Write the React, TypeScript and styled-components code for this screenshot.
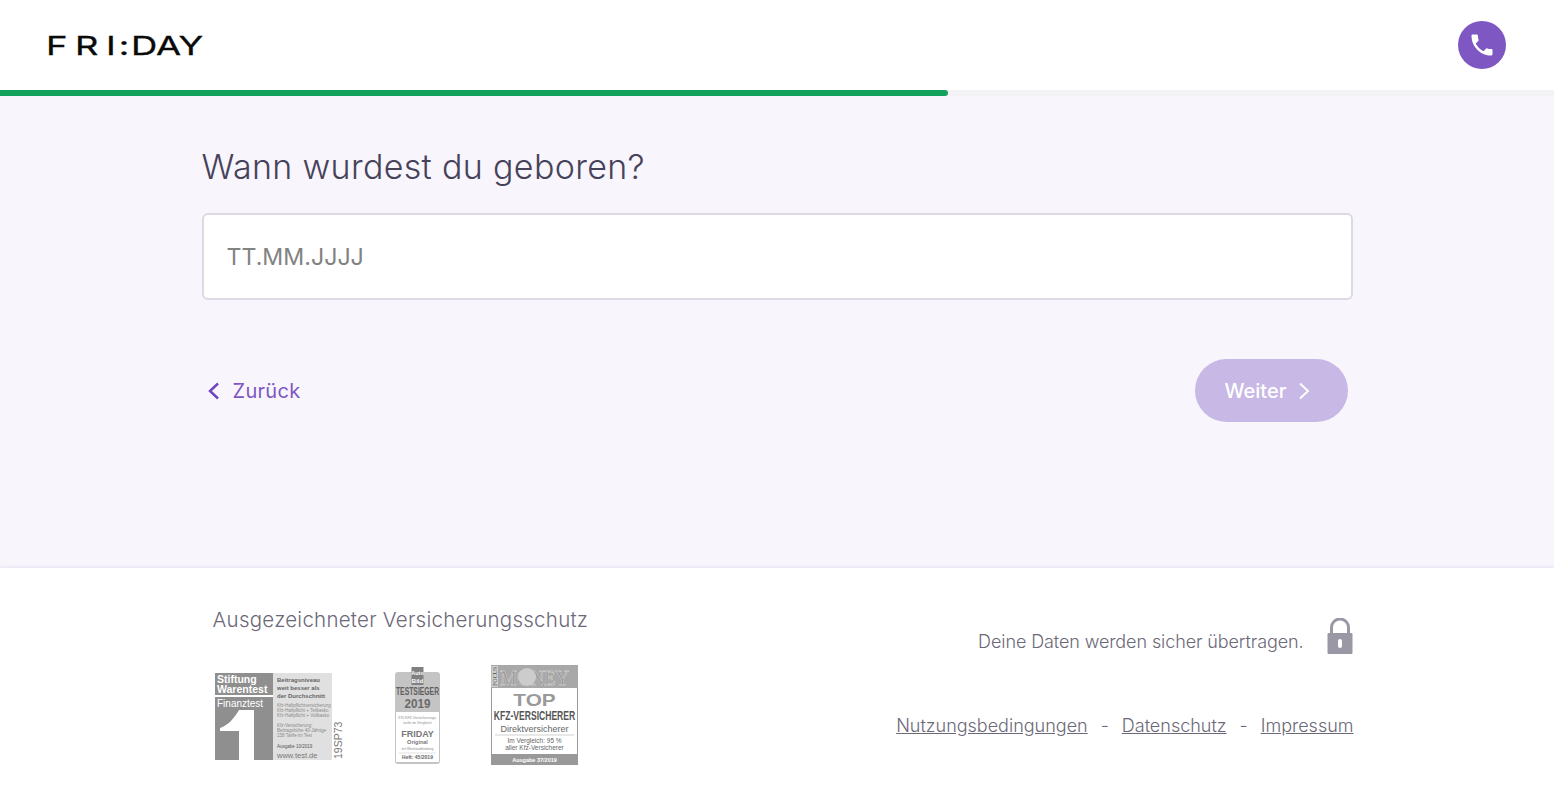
import React, { FC } from "react";
import styled, { createGlobalStyle } from "styled-components";

const GlobalStyle = createGlobalStyle`
  html, body {
    margin: 0;
    padding: 0;
    background: #ffffff;
    font-family: "Inter", "Open Sans", sans-serif;
  }
  * {
    box-sizing: border-box;
  }
`;

const Page = styled.div`
  display: flex;
  flex-direction: column;
  height: 794px;
  overflow: hidden;
`;
const Header = styled.header`
  display: flex;
  align-items: center;
  justify-content: space-between;
  height: 90px;
  padding: 0 48px;
  background: #ffffff;
`;
const Logo = styled.div`
  display: flex;
  align-items: baseline;
  width: 156px;
  margin: 1px 0 0 -2px;
  color: #0a0a0a;
  font-size: 26px;
  line-height: 28px;
  font-weight: 400;
  white-space: nowrap;
  transform: scaleX(1.4);
  transform-origin: left center;
  -webkit-text-stroke: 0.3px #0a0a0a;
`;
const LogoPart = styled.span<{ $spacing: number }>`
  letter-spacing: ${(p) => p.$spacing}px;
`;
const PhoneButton = styled.a`
  display: flex;
  align-items: center;
  justify-content: center;
  width: 48px;
  height: 48px;
  border-radius: 50%;
  background: #7e57c2;
`;
const ProgressTrack = styled.div`
  height: 6px;
  background: #f3f3f5;
`;
const ProgressFill = styled.div<{ $percent: number }>`
  width: ${(p) => p.$percent}%;
  height: 100%;
  background: #13a15c;
  border-radius: 0 3px 3px 0;
`;
const Main = styled.main`
  flex: 1;
  background: #f8f5fd;
`;
const Form = styled.div`
  width: 1151px;
  margin: 0 auto;
  padding-top: 50px;
`;
const Question = styled.h1`
  margin: 0 0 26px;
  color: #46425a;
  font-size: 34px;
  line-height: 41px;
  font-weight: 300;
  letter-spacing: 0.33px;
`;
const DateField = styled.div`
  display: flex;
  align-items: center;
  height: 87px;
  padding: 0 23px;
  background: #ffffff;
  border: 2px solid #dcdae3;
  border-radius: 6px;
  color: #828282;
  font-size: 23.2px;
  font-weight: 400;
`;
const Actions = styled.div`
  display: flex;
  align-items: center;
  justify-content: space-between;
  margin-top: 59px;
  padding: 0 5px;
`;
const BackLink = styled.a`
  display: flex;
  align-items: center;
  gap: 13px;
  color: #7e57c2;
  font-size: 20px;
  font-weight: 400;
  letter-spacing: 0.3px;
`;
const NextButton = styled.button`
  display: flex;
  align-items: center;
  justify-content: center;
  gap: 12px;
  width: 153px;
  height: 63px;
  padding: 0 6px 0 0;
  border: 0;
  border-radius: 32px;
  background: #c7b8e5;
  color: #ffffff;
  font-family: inherit;
  font-size: 20px;
  font-weight: 500;
`;
const Footer = styled.footer`
  display: flex;
  height: 226px;
  background: #ffffff;
  box-shadow: 0 0 4px rgba(70, 60, 110, 0.16);
`;
const FooterInner = styled.div`
  display: flex;
  justify-content: space-between;
  width: 1151px;
  margin: 0 auto;
  padding: 39px 0 0 11px;
`;
const Awards = styled.div`
  display: flex;
  flex-direction: column;
`;
const AwardsTitle = styled.div`
  color: #6b6878;
  font-size: 20.5px;
  line-height: 26px;
  font-weight: 300;
  letter-spacing: 0.25px;
`;
const BadgeRow = styled.div`
  display: flex;
  align-items: flex-start;
  margin-top: 40px;
  padding-left: 2px;
`;
const Badge = styled.svg<{ $gap?: number; $top?: number }>`
  display: block;
  flex: none;
  margin-left: ${(p) => p.$gap ?? 0}px;
  margin-top: ${(p) => p.$top ?? 0}px;
`;
const FooterRight = styled.div`
  display: flex;
  flex-direction: column;
  align-items: flex-end;
`;
const SecureRow = styled.div`
  display: flex;
  align-items: flex-end;
  gap: 23px;
  margin-top: 11px;
  color: #6b6878;
  font-size: 18px;
  line-height: 22px;
  font-weight: 300;
`;
const SecureText = styled.span`
  margin-bottom: 1px;
  letter-spacing: -0.1px;
`;
const LegalRow = styled.div`
  display: flex;
  align-items: center;
  gap: 13px;
  margin: 61px -1px 0 0;
  color: #6b6878;
  font-size: 18px;
  line-height: 22px;
  font-weight: 300;
`;
const LegalLink = styled.a`
  color: #6b6878;
  text-decoration: underline;
`;

const legalLinks = ["Nutzungsbedingungen", "Datenschutz", "Impressum"];

const TestBadge: FC = () => (
  <Badge width="130" height="90" viewBox="0 0 130 90" fontFamily="Liberation Sans, sans-serif">
    <rect x="0" y="0" width="58" height="22" fill="#8f8f8f" />
    <rect x="0" y="24" width="58" height="63" fill="#8f8f8f" />
    <rect x="58" y="0" width="59" height="87" fill="#e0e0e0" />
    <path d="M24 37 H39 V87 H24 V58 H5 V55 C12 53 19 46 24 37 Z" fill="#ffffff" />
    <text x="2" y="10" fontSize="10.5" fontWeight="700" fill="#fff">Stiftung</text>
    <text x="2" y="20" fontSize="10.5" fontWeight="700" fill="#fff">Warentest</text>
    <text x="2" y="34" fontSize="10" fill="#fff">Finanztest</text>
    <g fontSize="6" fontWeight="700" fill="#666">
      <text x="62" y="9">Beitragsniveau</text>
      <text x="62" y="17">weit besser als</text>
      <text x="62" y="25">der Durchschnitt</text>
    </g>
    <g fontSize="4.5" fill="#8a8a8a">
      <text x="62" y="34">Kfz-Haftpflichtversicherung</text>
      <text x="62" y="39">Kfz-Haftpflicht + Teilkasko</text>
      <text x="62" y="44">Kfz-Haftpflicht + Vollkasko</text>
      <text x="62" y="54">Kfz-Versicherung:</text>
      <text x="62" y="59">Beitragshöhe 40-Jährige</text>
      <text x="62" y="64">158 Tarife im Test</text>
      <text x="62" y="75" fill="#555">Ausgabe 10/2019</text>
    </g>
    <text x="62" y="85" fontSize="7.5" fill="#777">www.test.de</text>
    <text transform="translate(127 86) rotate(-90)" fontSize="10.5" fill="#777">19SP73</text>
  </Badge>
);

const BildBadge: FC = () => (
  <Badge
    $gap={50}
    $top={-7}
    width="46"
    height="99"
    viewBox="0 0 46 99"
    fontFamily="Liberation Sans, sans-serif"
  >
    <rect x="0" y="6" width="45" height="92" rx="3" fill="#c4c4c4" />
    <rect x="16.500" y="1" width="12" height="18" fill="#808080" />
    <text x="22.5" y="9" fontSize="5.500" fontWeight="700" fill="#fff" textAnchor="middle">Auto</text>
    <text x="22.5" y="17" fontSize="6" fontWeight="700" fill="#fff" textAnchor="middle">Bild</text>
    <text transform="translate(22.5 29) scale(0.62 1)" fontSize="11" fontWeight="700" fill="#5f5f5f" textAnchor="middle">TESTSIEGER</text>
    <text transform="translate(22.5 42) scale(0.9 1)" fontSize="13" fontWeight="700" fill="#6a6a6a" textAnchor="middle">2019</text>
    <rect x="1" y="46" width="43" height="50" fill="#ffffff" />
    <g textAnchor="middle" fill="#8c8c8c" fontSize="3.6">
      <text x="22.5" y="53">370 KFZ-Versicherungs-</text>
      <text x="22.5" y="58">tarife im Vergleich</text>
    </g>
    <text x="22.5" y="71" fontSize="9" fontWeight="700" fill="#777" textAnchor="middle">FRIDAY</text>
    <text x="22.5" y="78" fontSize="5.500" fontWeight="700" fill="#777" textAnchor="middle">Original</text>
    <text x="22.5" y="84" fontSize="3.4" fill="#8c8c8c" textAnchor="middle">mit Werkstattbindung</text>
    <line x1="4" y1="87" x2="41" y2="87" stroke="#ccc" strokeWidth="0.6" />
    <text x="22.5" y="93" fontSize="5" fontWeight="700" fill="#666" textAnchor="middle">Heft: 45/2019</text>
  </Badge>
);

const MoneyBadge: FC = () => (
  <Badge
    $gap={50}
    $top={-8}
    width="88"
    height="101"
    viewBox="0 0 88 101"
    fontFamily="Liberation Sans, sans-serif"
  >
    <rect x="0.5" y="0.5" width="86" height="99" fill="#ffffff" stroke="#9a9a9a" />
    <rect x="0" y="0" width="87" height="23" fill="#a8a8a8" />
    <rect x="0.5" y="1" width="6.500" height="21" fill="#d0d0d0" />
    <text transform="translate(6 21) rotate(-90)" fontSize="6" fontFamily="Liberation Serif, serif" fill="#444">FOCUS</text>
    <text transform="translate(9 20) scale(0.9 1)" fontSize="21" fontFamily="Liberation Serif, serif" fill="#8f8f8f" stroke="#e4e4e4" strokeWidth="0.4">MONEY</text>
    <circle cx="36" cy="12" r="9" fill="#cccccc" />
    <text transform="translate(43.5 41) scale(1.3 1)" fontSize="16" fontWeight="700" fill="#9a9a9a" textAnchor="middle">TOP</text>
    <text transform="translate(43.5 55) scale(0.66 1)" fontSize="13" fontWeight="700" fill="#555" textAnchor="middle">KFZ-VERSICHERER</text>
    <text x="43.5" y="67" fontSize="9" fill="#666" textAnchor="middle">Direktversicherer</text>
    <line x1="4" y1="70" x2="83" y2="70" stroke="#bbb" strokeWidth="0.7" />
    <text x="43.5" y="78" fontSize="6.500" fill="#666" textAnchor="middle">Im Vergleich: 95 %</text>
    <text x="43.5" y="85" fontSize="6.500" fill="#666" textAnchor="middle">aller Kfz-Versicherer</text>
    <rect x="0" y="89" width="87" height="11" fill="#999999" />
    <text x="43.5" y="97" fontSize="5.500" fontWeight="700" fill="#fff" textAnchor="middle">Ausgabe 37/2019</text>
  </Badge>
);

const App: FC = () => {
  return (
    <Page>
      <GlobalStyle />
      <Header>
        <Logo>
          <LogoPart $spacing={5.4}>FR</LogoPart>
          <LogoPart $spacing={2}>I</LogoPart>
          <LogoPart $spacing={1.4}>:</LogoPart>
          <LogoPart $spacing={0}>DAY</LogoPart>
        </Logo>
        <PhoneButton>
          <svg width="28" height="28" viewBox="0 0 24 24" fill="#ffffff">
            <path d="M6.62 10.79c1.44 2.83 3.76 5.14 6.59 6.59l2.2-2.2c.27-.27.67-.36 1.02-.24 1.12.37 2.33.57 3.57.57.55 0 1 .45 1 1V20c0 .55-.45 1-1 1-9.39 0-17-7.61-17-17 0-.55.45-1 1-1h3.5c.55 0 1 .45 1 1 0 1.25.2 2.45.57 3.57.11.35.03.74-.25 1.02l-2.2 2.2z" />
          </svg>
        </PhoneButton>
      </Header>
      <ProgressTrack>
        <ProgressFill $percent={61} />
      </ProgressTrack>
      <Main>
        <Form>
          <Question>Wann wurdest du geboren?</Question>
          <DateField>TT.MM.JJJJ</DateField>
          <Actions>
            <BackLink>
              <svg width="13" height="20" viewBox="0 0 13 20" fill="none" stroke="#6f42c1" strokeWidth="2.4">
                <path d="M11 2.500 3 10l8 7.500" />
              </svg>
              Zurück
            </BackLink>
            <NextButton>
              Weiter
              <svg width="13" height="20" viewBox="0 0 13 20" fill="none" stroke="#ffffff" strokeWidth="2">
                <path d="M2 2.500 10 10l-8 7.500" />
              </svg>
            </NextButton>
          </Actions>
        </Form>
      </Main>
      <Footer>
        <FooterInner>
          <Awards>
            <AwardsTitle>Ausgezeichneter Versicherungsschutz</AwardsTitle>
            <BadgeRow>
              <TestBadge />
              <BildBadge />
              <MoneyBadge />
            </BadgeRow>
          </Awards>
          <FooterRight>
            <SecureRow>
              <SecureText>Deine Daten werden sicher übertragen.</SecureText>
              <svg width="26" height="36" viewBox="0 0 26 36">
                <path d="M4.500 16V9.500a8.500 8.500 0 0 1 17 0V16" fill="none" stroke="#9a98a5" strokeWidth="3" />
                <rect x="0.500" y="15" width="25" height="21" rx="1" fill="#9a98a5" />
                <rect x="11" y="21" width="4" height="9" rx="2" fill="#ffffff" />
              </svg>
            </SecureRow>
            <LegalRow>
              {legalLinks.map((l, i) => (
                <React.Fragment key={l}>
                  {i > 0 && <span>-</span>}
                  <LegalLink>{l}</LegalLink>
                </React.Fragment>
              ))}
            </LegalRow>
          </FooterRight>
        </FooterInner>
      </Footer>
    </Page>
  );
};

export default App;
